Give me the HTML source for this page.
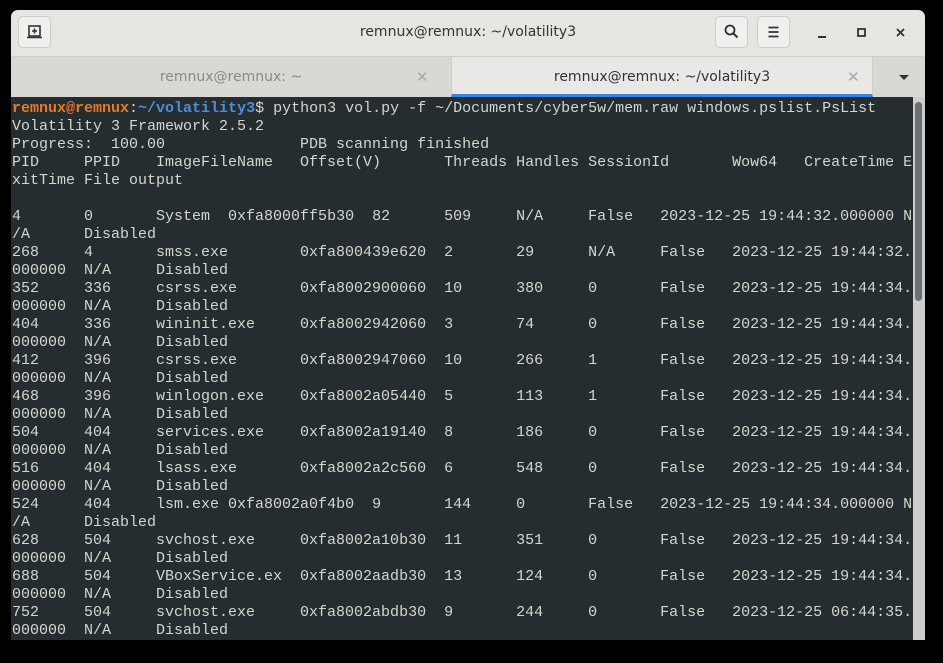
<!DOCTYPE html>
<html><head><meta charset="utf-8"><style>
html,body{margin:0;padding:0;background:#000;width:943px;height:663px;overflow:hidden}
.win{position:absolute;left:11px;top:10px;width:914px;height:630px;background:#262d30;border-radius:7px 7px 0 0;overflow:hidden}
.title{position:absolute;left:0;top:0;width:914px;height:46px;background:#e6e5e2;border-bottom:1px solid #cfcdc9;font-family:"DejaVu Sans","Liberation Sans",sans-serif}
.title .t{position:absolute;left:0;width:914px;top:14px;text-align:center;font-size:14px;color:#2e3436}
.btn{position:absolute;top:6px;width:33px;height:32px;border:1px solid #cdcbc7;border-radius:5px;background:#f1f0ee;box-sizing:border-box}
.tabs{position:absolute;left:0;top:47px;width:914px;height:40px;background:#dad8d4;font-family:"DejaVu Sans","Liberation Sans",sans-serif;font-size:14px}
.tab{position:absolute;top:0;height:40px;line-height:40px;text-align:center;color:#888a85}
.act{background:#e9e8e6;color:#2e3436;border-bottom:3px solid #3584e4;box-sizing:border-box;border-left:1px solid #cfcdc9;border-right:1px solid #cfcdc9}
.x{position:absolute;top:0;color:#a8a8a6;font-size:15px}
pre{position:absolute;left:1px;top:90px;margin:0;font-family:"Liberation Mono","DejaVu Sans Mono",monospace;font-size:15px;line-height:18px;color:#d3d7cf;tab-size:8;-moz-tab-size:8}
.o{color:#e9782a;font-weight:bold}.b{color:#4a8fd9;font-weight:bold}
.sb{position:absolute;left:902px;top:87px;width:12px;height:543px;background:#cecece}
.th{position:absolute;left:904px;top:92px;width:7px;height:199px;background:#6c7073;border-radius:4px}
</style></head><body>
<div class="win">
<div class="title">
 <div class="btn" style="left:7px"><svg width="31" height="30" viewBox="0 0 31 30"><rect x="10" y="9" width="11" height="10" fill="none" stroke="#2e3436" stroke-width="1.6"/><path d="M8 20.5h15M15.5 11.5v5M13 14h5" stroke="#2e3436" stroke-width="1.6"/></svg></div>
 <div class="t">remnux@remnux: ~/volatility3</div>
 <div class="btn" style="left:704px"><svg width="31" height="30" viewBox="0 0 31 30"><circle cx="14" cy="13" r="4.5" fill="none" stroke="#2e3436" stroke-width="1.8"/><path d="M17.5 16.5l4 4" stroke="#2e3436" stroke-width="2"/></svg></div>
 <div class="btn" style="left:746px"><svg width="31" height="30" viewBox="0 0 31 30"><path d="M10.5 10.5h10M10.5 15h10M10.5 19.5h10" stroke="#2e3436" stroke-width="1.7"/></svg></div>
 <svg style="position:absolute;left:800px;top:12px" width="100" height="22"><path d="M7 15h8" stroke="#2e3436" stroke-width="2"/><rect x="47" y="7" width="7" height="7" fill="none" stroke="#2e3436" stroke-width="1.8"/><path d="M86 7l7 7M93 7l-7 7" stroke="#2e3436" stroke-width="1.8"/></svg>
</div>
<div class="tabs">
 <div class="tab" style="left:0;width:440px">remnux@remnux: ~</div><div class="x" style="left:405px;line-height:40px">✕</div>
 <div class="tab act" style="left:440px;width:422px">remnux@remnux: ~/volatility3</div><div class="x" style="left:836px;line-height:40px">✕</div>
 <svg style="position:absolute;left:887px;top:17px" width="12" height="8"><path d="M1 1h10l-5 5z" fill="#2e3436"/></svg>
</div>
<pre><span class="o">remnux@remnux</span>:<span class="b">~/volatility3</span>$ python3 vol.py -f ~/Documents/cyber5w/mem.raw windows.pslist.PsList
Volatility 3 Framework 2.5.2
Progress:  100.00		PDB scanning finished
PID	PPID	ImageFileName	Offset(V)	Threads	Handles	SessionId	Wow64	CreateTime E
xitTime	File output

4	0	System	0xfa8000ff5b30	82	509	N/A	False	2023-12-25 19:44:32.000000 N
/A	Disabled
268	4	smss.exe	0xfa800439e620	2	29	N/A	False	2023-12-25 19:44:32.
000000 	N/A	Disabled
352	336	csrss.exe	0xfa8002900060	10	380	0	False	2023-12-25 19:44:34.
000000 	N/A	Disabled
404	336	wininit.exe	0xfa8002942060	3	74	0	False	2023-12-25 19:44:34.
000000 	N/A	Disabled
412	396	csrss.exe	0xfa8002947060	10	266	1	False	2023-12-25 19:44:34.
000000 	N/A	Disabled
468	396	winlogon.exe	0xfa8002a05440	5	113	1	False	2023-12-25 19:44:34.
000000 	N/A	Disabled
504	404	services.exe	0xfa8002a19140	8	186	0	False	2023-12-25 19:44:34.
000000 	N/A	Disabled
516	404	lsass.exe	0xfa8002a2c560	6	548	0	False	2023-12-25 19:44:34.
000000 	N/A	Disabled
524	404	lsm.exe	0xfa8002a0f4b0	9	144	0	False	2023-12-25 19:44:34.000000 N
/A	Disabled
628	504	svchost.exe	0xfa8002a10b30	11	351	0	False	2023-12-25 19:44:34.
000000 	N/A	Disabled
688	504	VBoxService.ex	0xfa8002aadb30	13	124	0	False	2023-12-25 19:44:34.
000000 	N/A	Disabled
752	504	svchost.exe	0xfa8002abdb30	9	244	0	False	2023-12-25 06:44:35.
000000 	N/A	Disabled</pre>
<div class="sb"></div><div class="th"></div>
</div>
</body></html>
